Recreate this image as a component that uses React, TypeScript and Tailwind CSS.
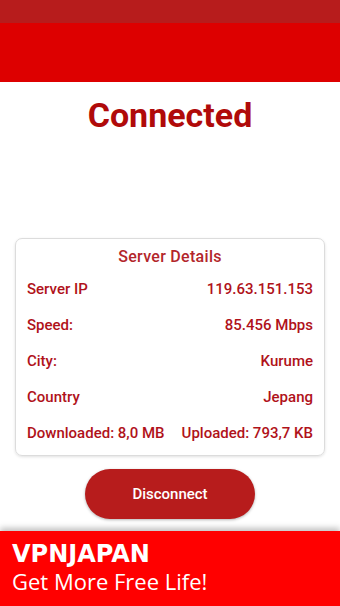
const ROWS: [string, string][] = [
  ["Server IP", "119.63.151.153"],
  ["Speed:", "85.456 Mbps"],
  ["City:", "Kurume"],
  ["Country", "Jepang"],
  ["Downloaded: 8,0 MB", "Uploaded: 793,7 KB"],
];

export default function App() {
  return (
    <div
      className="w-[340px] h-[606px] bg-white flex flex-col overflow-hidden"
      style={{ fontFamily: "Roboto, 'Noto Sans', sans-serif" }}
    >
      <div className="h-[23px] bg-[#b71c1c] shrink-0" />
      <div className="h-[59px] bg-[#dd0000] shrink-0" />

      <h1 className="mt-[13px] text-center text-[34px] leading-[40px] font-bold text-[#b00a0a]">
        Connected
      </h1>

      <div className="mt-[103px] mx-[15px] rounded-[7px] border border-[#dcdcdc] shadow-[0_1px_3px_rgba(0,0,0,0.12)] px-[11px] pt-[8px] pb-[4px]">
        <div className="text-center text-[16px] leading-[20px] tracking-[0.3px] font-medium text-[#b3262b] mb-[4px]">
          Server Details
        </div>
        {ROWS.map(([k, v]) => (
          <div
            key={k}
            className="flex justify-between items-center h-[36px] text-[15px] font-medium text-[#b0121a]"
          >
            <span>{k}</span>
            <span>{v}</span>
          </div>
        ))}
      </div>

      <div className="flex justify-center mt-[13px]">
        <button className="w-[170px] h-[50px] rounded-full bg-[#b71c1c] text-white text-[15px] font-medium shadow-[0_1px_3px_rgba(0,0,0,0.3)]">
          Disconnect
        </button>
      </div>

      <div className="mt-auto h-[75px] bg-[#ff0000] shrink-0 px-[12px] pt-[9px] shadow-[0_-3px_6px_rgba(0,0,0,0.25)]">
        <div className="text-white text-[24px] leading-[28px] font-bold" style={{ fontFamily: "'DejaVu Sans', sans-serif" }}>
          VPNJAPAN
        </div>
        <div className="text-white text-[22px] leading-[26px]" style={{ fontFamily: "'Open Sans', sans-serif" }}>
          Get More Free Life!
        </div>
      </div>
    </div>
  );
}
